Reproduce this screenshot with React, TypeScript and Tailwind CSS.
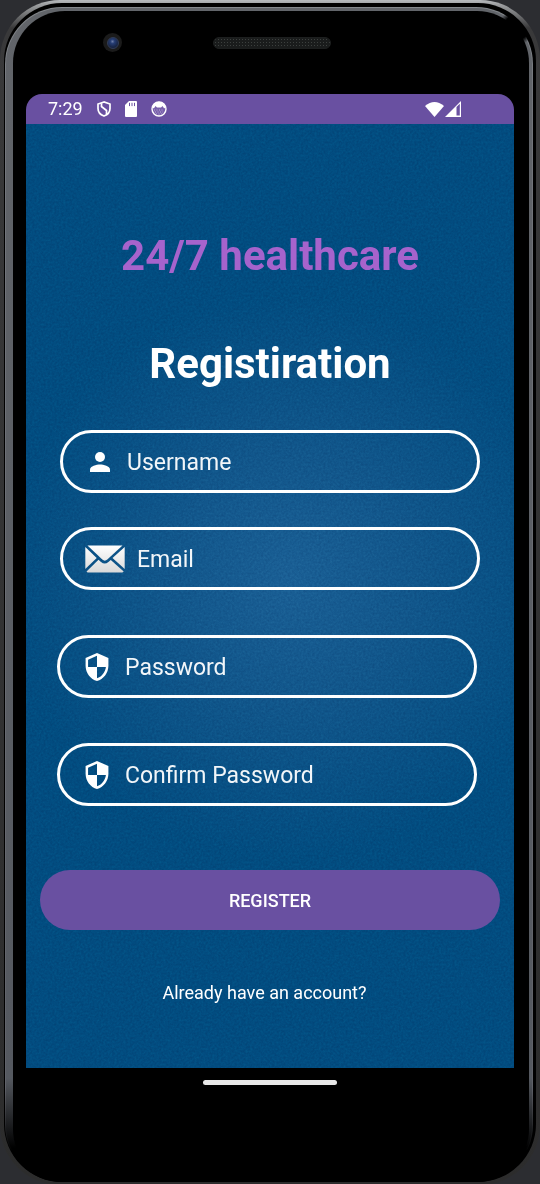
import React from "react";

function UserIcon() {
  return (
    <svg viewBox="0 0 20 20" className="h-5 w-5 shrink-0" fill="#fff" aria-hidden="true">
      <circle cx="10" cy="5" r="5" />
      <path d="M0 20v-2.500C0 14.200 6.500 12.500 10 12.500s10 1.700 10 5V20z" />
    </svg>
  );
}

function ShieldIcon() {
  return (
    <svg viewBox="0 0 22 27" className="h-7 w-6 shrink-0" fill="#fff" aria-hidden="true">
      <path
        fillRule="evenodd"
        d="M11 0 0 4.900v7.300C0 19 4.700 25.400 11 27c6.300-1.600 11-8 11-14.800V4.900zM11 13.500h8.600c-.7 5-4.100 9.500-8.600 10.900V13.500H2.400v-7L11 2.700z"
      />
    </svg>
  );
}

function MailIcon() {
  return (
    <svg viewBox="0 0 40 28" className="h-7 w-10 shrink-0" aria-hidden="true">
      <defs>
        <linearGradient id="paper" gradientUnits="userSpaceOnUse" x1="0" y1="0" x2="0" y2="28">
          <stop offset="0" stopColor="#ffffff" />
          <stop offset="1" stopColor="#d8d8d8" />
        </linearGradient>
      </defs>
      <g fill="url(#paper)">
        <path d="M2.500.5h35L22.300 14.600q-2.500 2.200-5 0z" />
        <path d="M.3 1.900 11.700 12.900.3 24z" />
        <path d="M39.700 1.900 27.500 12.900l12.200 11.100z" />
        <path d="M1.500 26.500 13.500 14.800l2.500 2.300q3.700 3 7.400 0l2.400-2.200 12.900 11.600q-.8 1-1.700 1H3q-1 0-1.500-1z" />
      </g>
    </svg>
  );
}

function StatusBar() {
  return (
    <div className="flex h-[30px] items-center rounded-t-2xl bg-[#6950a1] pr-[53px] pl-[22px] text-[18px] leading-6 text-white">
      <span>7:29</span>
      <svg viewBox="0 0 14 16" className="ml-3.5 h-4 w-3.5" fill="none" stroke="#fff" strokeWidth="1.700" aria-hidden="true">
        <path d="M7 1 1 3v4.500c0 3.500 2.500 6.300 6 7.500 3.500-1.200 6-4 6-7.500V3z" />
        <path d="M4.500 2.200v3.300l5 4v3.500" />
      </svg>
      <svg viewBox="0 0 12 16" className="ml-3.5 h-4 w-3" aria-hidden="true">
        <path fill="#fff" d="M4 0h7q1 0 1 1v14q0 1-1 1H1q-1 0-1-1V4z" />
        <path stroke="#6950a1" d="M4.500 1.800v3.300M7 1.800v3.300M9.500 1.800v3.300" />
      </svg>
      <svg viewBox="0 0 16 16" className="ml-3.5 h-4 w-4" aria-hidden="true">
        <circle cx="8" cy="8" r="7" fill="#7860ab" stroke="#fff" strokeWidth="1.400" />
        <path fill="#fff" d="M1 7 3 2.500Q8-1 13 2.500L15 7l-2 .2-1.500-2.200-1.500 1.500H6L4.500 5 3 7.200z" />
        <path stroke="#b9add6" strokeDasharray="1 1.500" d="M3 9h10M4 11h8M5 13h6" />
      </svg>
      <span className="grow" />
      <svg viewBox="0 0 19 15" className="h-[15px] w-[19px]" fill="#fff" aria-hidden="true">
        <path d="M0 4Q9.500-4 19 4L9.500 15z" />
      </svg>
      <svg viewBox="0 0 16 16" className="ml-px h-4 w-4" aria-hidden="true">
        <path fill="#fff" d="M0 16 16 0v16z" />
        <path fill="#6950a1" d="M11.500 6 14.800 2.800V14.500h-3.300z" />
      </svg>
    </div>
  );
}

type FieldProps = {
  id: string;
  label: string;
  type: string;
  icon: React.ReactNode;
  className: string;
};

function Field({ id, label, type, icon, className }: FieldProps) {
  return (
    <div className={`flex h-[63px] items-center rounded-full border-3 border-white ${className}`}>
      <label htmlFor={id} aria-label={label}>
        {icon}
      </label>
      <input
        id={id}
        type={type}
        placeholder={label}
        className="min-w-0 grow bg-transparent pt-0.5 text-[23px] leading-8 text-white outline-none placeholder:text-white/95"
      />
    </div>
  );
}

function Texture() {
  return (
    <svg className="pointer-events-none absolute inset-0 h-full w-full opacity-20 mix-blend-soft-light" aria-hidden="true">
      <filter id="grain" colorInterpolationFilters="sRGB">
        <feTurbulence type="fractalNoise" baseFrequency="0.45" numOctaves="3" />
        <feColorMatrix values="1 0 0 0 0  1 0 0 0 0  1 0 0 0 0  0 0 0 0 1" />
      </filter>
      <rect width="100%" height="100%" filter="url(#grain)" />
    </svg>
  );
}

function Registration() {
  return (
    <main className="relative bg-[#024c80] bg-[radial-gradient(circle_280px_at_54%_48%,#1a5f95_0%,#11568b_45%,#024c80_100%)]">
      <Texture />
      <form className="relative flex flex-col pt-[108px] pb-[63px]" onSubmit={(e) => e.preventDefault()}>
        <h1 className="text-center text-[42px] leading-12 font-bold text-[#a663cc]">24/7 healthcare</h1>
        <h2 className="mt-[60px] text-center text-[42px] leading-12 font-bold text-white">Registiration</h2>
        <Field id="username" label="Username" type="text" icon={<UserIcon />} className="mx-[34px] mt-[42px] gap-[17px] px-[27px]" />
        <Field id="email" label="Email" type="email" icon={<MailIcon />} className="mx-[34px] mt-[34px] gap-3 px-[22px]" />
        <Field id="password" label="Password" type="password" icon={<ShieldIcon />} className="mt-[45px] mr-[37px] ml-[31px] gap-4 px-[25px]" />
        <Field id="confirm" label="Confirm Password" type="password" icon={<ShieldIcon />} className="mt-[45px] mr-[37px] ml-[31px] gap-4 px-[25px]" />
        <button type="submit" className="mx-3.5 mt-16 h-[60px] rounded-full bg-[#6950a1] text-[18px] font-medium text-white">
          REGISTER
        </button>
        <a href="#login" className="mt-[51px] mr-[11px] self-center text-[18px] leading-6 text-white">
          Already have an account?
        </a>
      </form>
    </main>
  );
}

export default function App() {
  return (
    <div className="flex min-h-screen flex-col bg-[#2c2d31] font-['Roboto',sans-serif]">
      <div className="flex grow flex-col rounded-[60px] bg-[linear-gradient(to_bottom,#b8bbbe_0,#a0a2a4_4px,#39393a_28px,#2c2c2c_100%)] pt-[3px] pr-1 pb-[3px] pl-1">
        <div className="flex grow flex-col rounded-[58px] bg-black pt-1 pr-[3px] pl-px">
          <div className="flex grow flex-col rounded-[57px] bg-[radial-gradient(circle_18px_at_calc(100%-16px)_20px,#000_70%,transparent_100%),linear-gradient(to_bottom,#85898d_0,#74777d_80px,#606269_1080px,#000_1145px)] p-px">
            <div className="flex grow flex-col rounded-[56px] bg-[radial-gradient(circle_18px_at_calc(100%-15px)_19px,#000_70%,transparent_100%),linear-gradient(to_bottom,#62656a_0,#555960_1070px,#000_1140px)] pt-[3px] pr-[3px] pl-[7px]">
              <div className="flex grow flex-col rounded-[52px] bg-black pr-[15px] pl-[13px]">
                <div className="flex h-[83px] items-start justify-between pt-[22px] pr-[183px] pl-[77px]">
                  <span className="flex h-[19px] w-[19px] items-center justify-center rounded-full bg-[#1b1b1b]">
                    <span className="h-3 w-3 rounded-full border border-[#303b56] bg-[radial-gradient(circle_at_45%_35%,#6c7ca6_0,#263d74_25%,#172340_70%)]" />
                  </span>
                  <span className="mt-1 h-3 w-[118px] rounded-full border border-[#1c1e1e] bg-[#1a1c1c] bg-[radial-gradient(circle,#3c403e_35%,transparent_45%)] bg-size-[3px_3px]" />
                </div>
                <StatusBar />
                <Registration />
                <div className="flex h-[113px] justify-center pt-3">
                  <span className="h-[5px] w-[134px] rounded-full bg-[#e8e8e8]" />
                </div>
              </div>
            </div>
          </div>
        </div>
      </div>
    </div>
  );
}
